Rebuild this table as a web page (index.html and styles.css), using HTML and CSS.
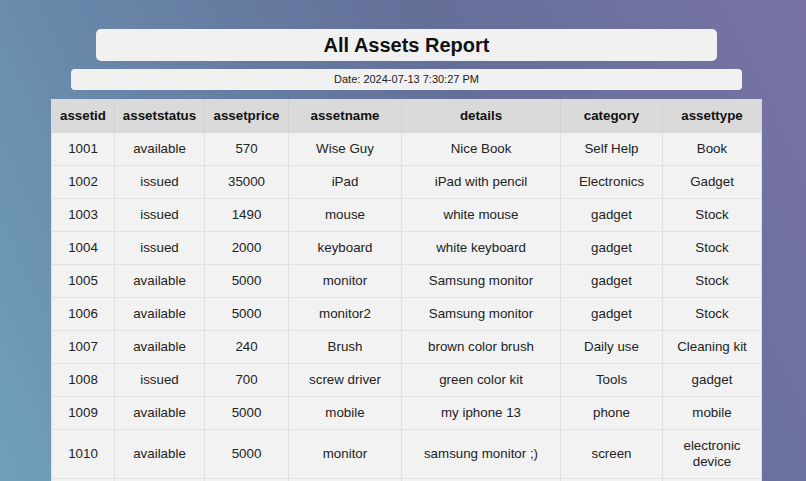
FILE: index.html
```html
<!DOCTYPE html>
<html>
<head>
<meta charset="utf-8">
<title>All Assets Report</title>
<link rel="stylesheet" href="styles.css">
</head>
<body>
<div class="page">
  <h1 class="title">All Assets Report</h1>
  <div class="date">Date: 2024-07-13 7:30:27 PM</div>
  <table class="report">
    <colgroup>
      <col class="c1"><col class="c2"><col class="c3"><col class="c4"><col class="c5"><col class="c6"><col class="c7">
    </colgroup>
    <thead>
      <tr><th>assetid</th><th>assetstatus</th><th>assetprice</th><th>assetname</th><th>details</th><th>category</th><th>assettype</th></tr>
    </thead>
    <tbody>
      <tr><td>1001</td><td>available</td><td>570</td><td>Wise Guy</td><td>Nice Book</td><td>Self Help</td><td>Book</td></tr>
      <tr><td>1002</td><td>issued</td><td>35000</td><td>iPad</td><td>iPad with pencil</td><td>Electronics</td><td>Gadget</td></tr>
      <tr><td>1003</td><td>issued</td><td>1490</td><td>mouse</td><td>white mouse</td><td>gadget</td><td>Stock</td></tr>
      <tr><td>1004</td><td>issued</td><td>2000</td><td>keyboard</td><td>white keyboard</td><td>gadget</td><td>Stock</td></tr>
      <tr><td>1005</td><td>available</td><td>5000</td><td>monitor</td><td>Samsung monitor</td><td>gadget</td><td>Stock</td></tr>
      <tr><td>1006</td><td>available</td><td>5000</td><td>monitor2</td><td>Samsung monitor</td><td>gadget</td><td>Stock</td></tr>
      <tr><td>1007</td><td>available</td><td>240</td><td>Brush</td><td>brown color brush</td><td>Daily use</td><td>Cleaning kit</td></tr>
      <tr><td>1008</td><td>issued</td><td>700</td><td>screw driver</td><td>green color kit</td><td>Tools</td><td>gadget</td></tr>
      <tr><td>1009</td><td>available</td><td>5000</td><td>mobile</td><td>my iphone 13</td><td>phone</td><td>mobile</td></tr>
      <tr><td>1010</td><td>available</td><td>5000</td><td>monitor</td><td>samsung monitor ;)</td><td>screen</td><td>electronic device</td></tr>
      <tr class="more"><td></td><td></td><td></td><td></td><td></td><td></td><td></td></tr>
    </tbody>
  </table>
</div>
</body>
</html>
```

FILE: styles.css
```css
html, body {
  margin: 0;
  padding: 0;
}
body {
  min-height: 100vh;
  background: linear-gradient(65deg, #70a0bb 0%, #6887a9 28%, #646f98 62%, #7873a3 100%);
  background-attachment: fixed;
  font-family: "Liberation Sans", Arial, sans-serif;
  color: #222;
}
.page {
  display: flex;
  flex-direction: column;
  align-items: center;
  padding: 29px 0 0 7px;
}
.title {
  width: 621px;
  height: 32px;
  margin: 0;
  box-sizing: border-box;
  background: #f1f1f1;
  border-radius: 5px;
  font-size: 20px;
  font-weight: bold;
  line-height: 32px;
  text-align: center;
  color: #111;
}
.date {
  width: 671px;
  height: 21px;
  margin-top: 8px;
  background: #f1f1f1;
  border-radius: 4px;
  font-size: 11px;
  line-height: 21px;
  text-align: center;
  color: #222;
}
.report {
  width: 710px;
  margin-top: 9px;
  border-collapse: collapse;
  table-layout: fixed;
  background: #f2f2f2;
  font-size: 13.33px;
  line-height: 16px;
}
.c1 { width: 63px; }
.c2 { width: 90px; }
.c3 { width: 84px; }
.c4 { width: 113px; }
.c5 { width: 159px; }
.c6 { width: 102px; }
.c7 { width: 99px; }
.report th,
.report td {
  padding: 8px 4px;
  text-align: center;
  border: 1px solid #e0e0e0;
}
.report th {
  background: #dadada;
  font-weight: bold;
  color: #111;
  border-color: #dadada;
  border-right-color: #d2d2d2;
}
.report td {
  color: #222;
}
.report .more td {
  height: 16px;
}
```
